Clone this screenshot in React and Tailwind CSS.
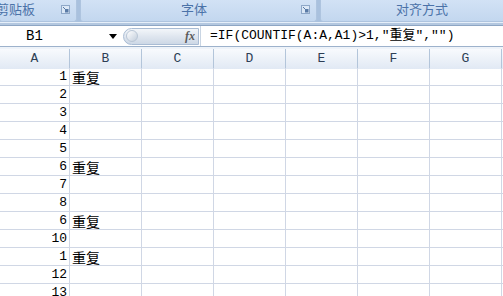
import React from 'react';

const mono = { fontFamily: '"Liberation Mono", "Noto Sans CJK SC", monospace' };

// 列宽（含右边框）
const COLS = ['A', 'B', 'C', 'D', 'E', 'F', 'G', 'H'];
const ROWS = [
  [1, '重复'], [2, ''], [3, ''], [4, ''], [5, ''], [6, '重复'], [7, ''],
  [8, ''], [6, '重复'], [10, ''], [1, '重复'], [12, ''], [13, ''],
];

const Launcher = () => (
  <svg width="9" height="9" viewBox="0 0 9 9" className="shrink-0">
    <rect x="0.5" y="0.5" width="8" height="8" fill="#dce8f6" stroke="#8fa8c8" />
    <rect x="4" y="4" width="3.5" height="3.5" fill="#5a7ba6" />
    <path d="M2 2 L5 5" stroke="#5a7ba6" strokeWidth="1" />
  </svg>
);

const RibbonGroup = ({ label, width, launcher = true, textClass = '' }) => (
  <div
    className={`h-[22px] shrink-0 flex items-center rounded-b-[3px] border-x border-b border-[#aec4df] bg-gradient-to-b from-[#d2e2f5] to-[#c3d7ef] ${width}`}
  >
    <div className={`flex-1 text-center text-[13px] text-[#4b72a8] leading-none ${textClass}`}>{label}</div>
    {launcher && <div className="pr-[6px] pb-[3px]"><Launcher /></div>}
  </div>
);

const App = () => {
  return (
    <div
      className="w-[503px] h-[296px] overflow-hidden bg-white"
      style={{ fontFamily: '"Liberation Mono", "Noto Sans CJK SC", monospace' }}
    >
      {/* 功能区分组标签 */}
      <div className="flex gap-[3px] h-[22px] bg-[#a9c1de] overflow-hidden">
        <RibbonGroup label="剪贴板" width="w-[78px] -ml-[1px]" textClass="text-left -ml-[4px]" />
        <RibbonGroup label="字体" width="w-[237px]" textClass="pl-[6px]" />
        <RibbonGroup label="对齐方式" width="w-[210px]" launcher={false} textClass="pr-[6px]" />
      </div>
      <div className="h-[1px] bg-[#e6eff9]" />
      <div className="h-[2px] bg-[#b4c8e0]" />
      <div className="h-[1px] bg-[#8ea6c4]" />

      {/* 编辑栏 */}
      <div className="flex h-[20px] items-center bg-white">
        <div className="w-[123px] h-full flex items-center">
          <span className="pl-[26px] text-[14px] text-black" style={mono}>B1</span>
          <span className="ml-auto mr-[6px] w-0 h-0 border-x-[4px] border-x-transparent border-t-[5px] border-t-black" />
        </div>
        <div className="w-[76px] h-[17px] flex items-center rounded-l-full rounded-r-[2px] border border-[#a9bcd4] bg-gradient-to-b from-[#f3f6fa] via-[#dfe6ef] to-[#cdd8e6]">
          <div className="ml-[2px] w-[12px] h-[12px] rounded-full border border-[#b9c6d6] bg-gradient-to-br from-[#ffffff] to-[#c3cedc]" />
          <span className="ml-auto mr-[3px] text-[12px] italic font-bold text-[#5b5b5b]" style={{ fontFamily: '"Liberation Serif", serif' }}>
            fx
          </span>
        </div>
        <div className="w-[1px] h-full bg-[#c9d5e3] ml-[1px]" />
        <div className="pl-[9px] text-[13px] text-black whitespace-nowrap" style={mono}>
          =IF(COUNTIF(A:A,A1)&gt;1,"重复","")
        </div>
      </div>
      <div className="h-[1px] bg-[#9db2cc]" />
      <div className="h-[2px] bg-[#eef3f9]" />

      {/* 列标题 */}
      <div className="grid grid-cols-[70px_72px_72px_72px_72px_72px_72px_72px] h-[19px] border-b border-[#b6c7db]">
        {COLS.map((c) => (
          <div
            key={c}
            className="flex items-center justify-center border-r border-[#b3c5da] bg-gradient-to-b from-[#f8fafd] to-[#e1e9f4] text-[13px] text-[#2d3e55]"
          >
            {c}
          </div>
        ))}
      </div>

      {/* 数据行 */}
      {ROWS.map(([n, b], i) => (
        <div key={i} className="grid grid-cols-[70px_72px_72px_72px_72px_72px_72px_72px] h-[18px]">
          {COLS.map((c, j) => (
            <div
              key={c}
              className="border-r border-b border-[#d0d7e5] flex items-center overflow-hidden text-black"
            >
              {j === 0 && (
                <span className="ml-auto pr-[2px] text-[13px] leading-none">{n}</span>
              )}
              {j === 1 && b && (
                <span className="pl-[2px] text-[14px] leading-none" style={{ fontFamily: '"Noto Sans CJK SC", sans-serif' }}>
                  {b}
                </span>
              )}
            </div>
          ))}
        </div>
      ))}
    </div>
  );
};

export default App;
